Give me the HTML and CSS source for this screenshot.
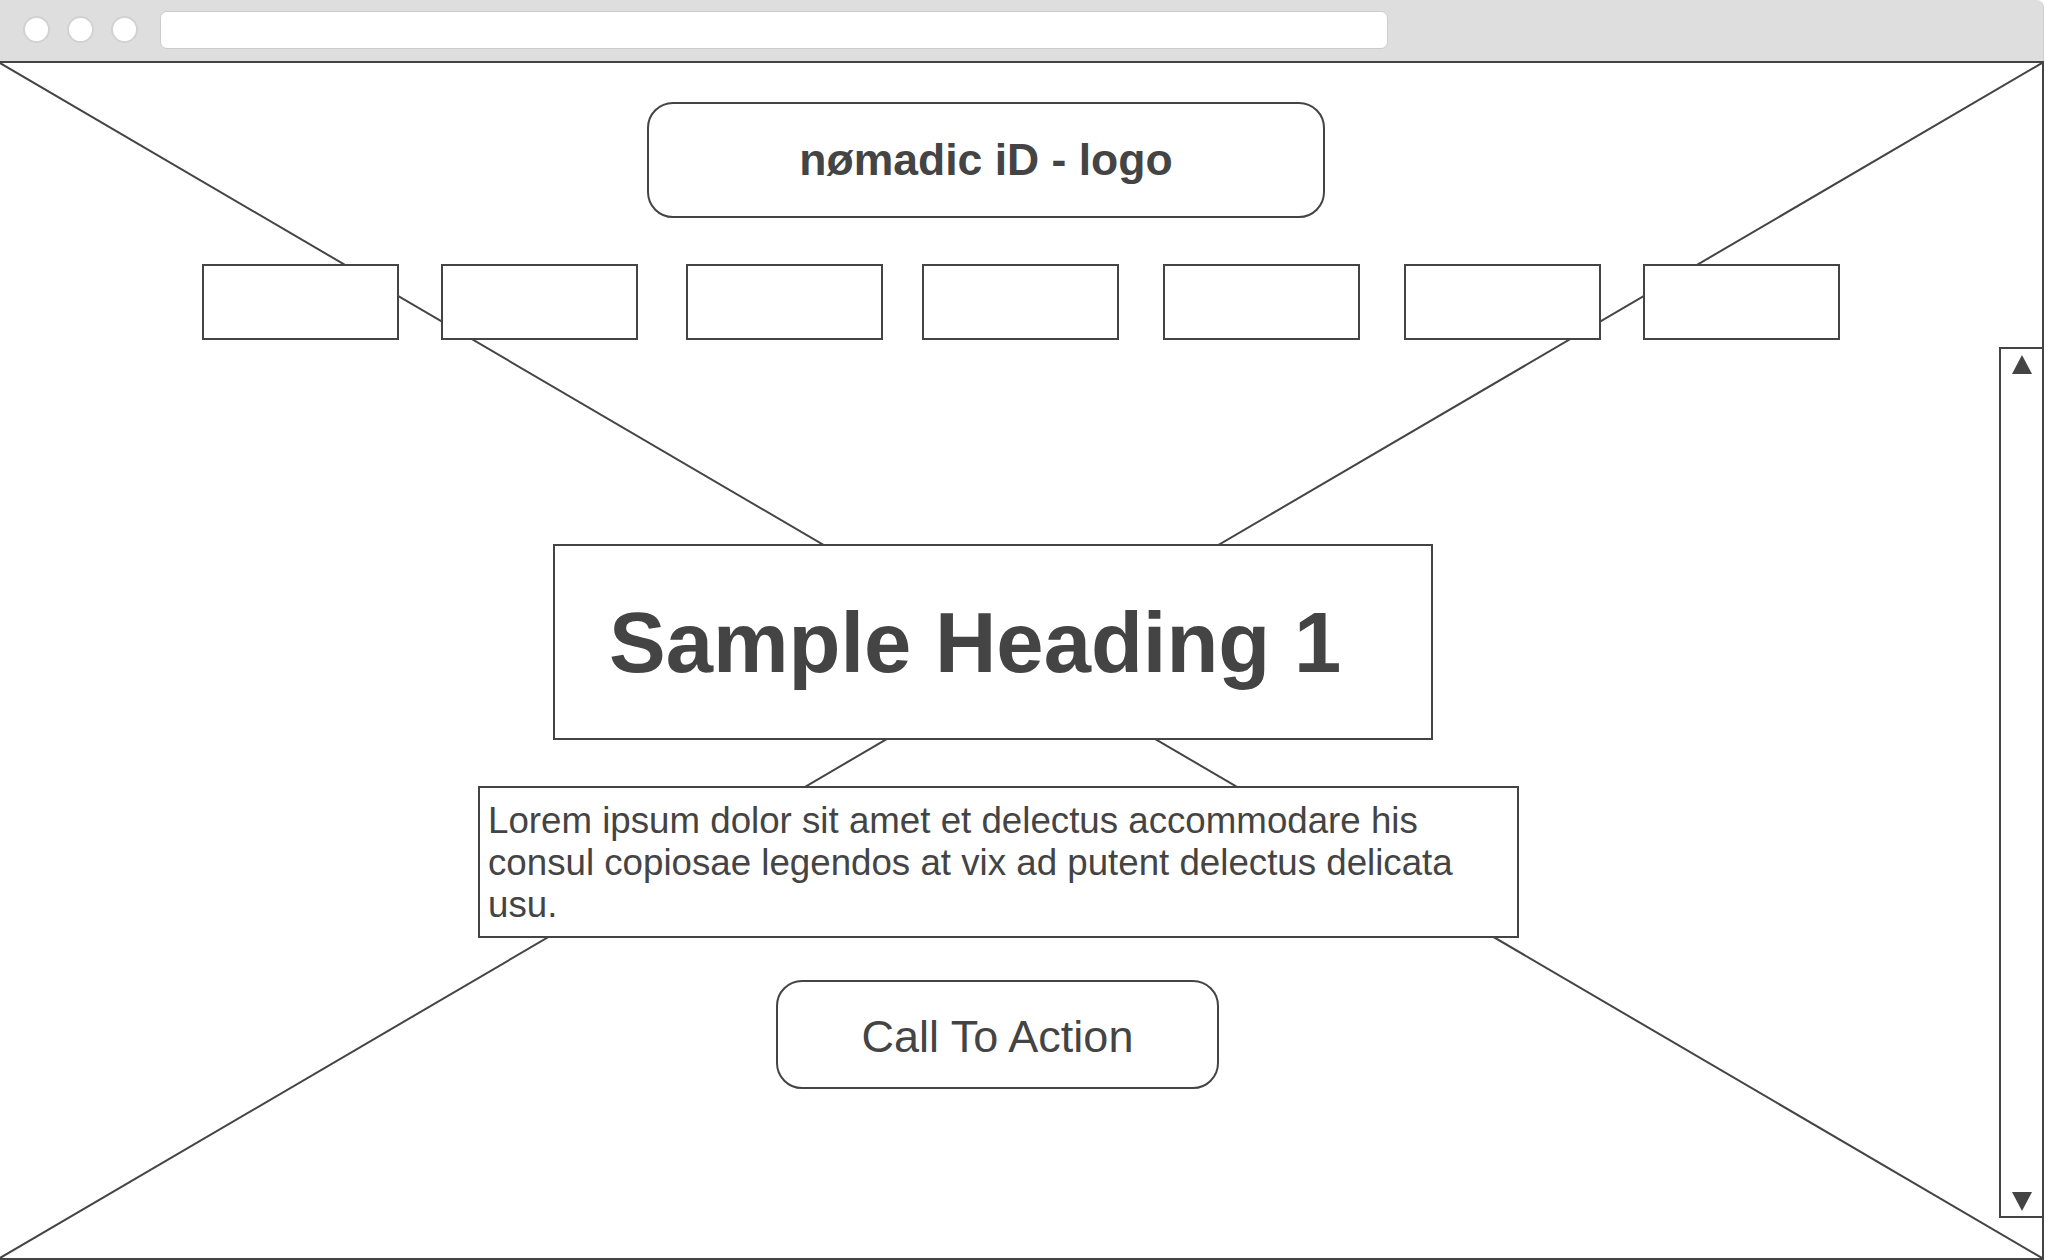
FILE: index.html
```html
<!DOCTYPE html>
<html lang="en">
<head>
<meta charset="utf-8">
<title>nømadic iD - wireframe</title>
<link rel="stylesheet" href="styles.css">
</head>
<body>
<div class="window">
  <div class="topbar">
    <span class="dot"></span>
    <span class="dot"></span>
    <span class="dot"></span>
    <div class="urlbar"></div>
  </div>
  <div class="frame">
    <svg class="cross" viewBox="0 0 100 100" preserveAspectRatio="none" aria-hidden="true">
      <line x1="0" y1="0" x2="100" y2="100" vector-effect="non-scaling-stroke"/>
      <line x1="100" y1="0" x2="0" y2="100" vector-effect="non-scaling-stroke"/>
    </svg>
    <div class="content">
      <div class="logo">nømadic iD - logo</div>
      <nav class="nav">
        <div class="nav-item"></div>
        <div class="nav-item"></div>
        <div class="nav-item"></div>
        <div class="nav-item"></div>
        <div class="nav-item"></div>
        <div class="nav-item"></div>
        <div class="nav-item"></div>
      </nav>
      <div class="heading-box"><h1 class="heading">Sample Heading 1</h1></div>
      <p class="para">Lorem ipsum dolor sit amet et delectus accommodare his consul copiosae legendos at vix ad putent delectus delicata usu.</p>
      <div class="cta">Call To Action</div>
    </div>
    <div class="scrollbar">
      <span class="arrow-up"></span>
      <span class="arrow-down"></span>
    </div>
  </div>
</div>
</body>
</html>
```
FILE: styles.css
```css
html, body {
  margin: 0;
  padding: 0;
  background: #ffffff;
}
body {
  width: 2046px;
  height: 1260px;
  overflow: hidden;
  font-family: "Liberation Sans", Arial, sans-serif;
  color: #444444;
}
.window {
  width: 2044px;
  height: 1260px;
  display: flex;
  flex-direction: column;
}
.topbar {
  height: 61px;
  flex: none;
  box-sizing: border-box;
  background: #dedede;
  border-top-right-radius: 8px;
  border-right: 1px solid #cfcfcf;
  display: flex;
  align-items: center;
  padding-left: 23px;
}
.dot {
  width: 23px;
  height: 23px;
  border-radius: 50%;
  background: #ffffff;
  border: 2px solid #d2d2d2;
  margin-right: 17px;
  flex: none;
  margin-top: -2px;
}
.dot:nth-child(3) {
  margin-right: 22px;
}
.urlbar {
  width: 1226px;
  height: 36px;
  background: #ffffff;
  border: 1.5px solid #cccccc;
  border-radius: 7px;
  margin-top: -2px;
}
.frame {
  flex: 1;
  position: relative;
  display: flex;
  border-top: 2px solid #444444;
  border-right: 2px solid #444444;
  border-bottom: 2px solid #444444;
}
.cross {
  position: absolute;
  left: 0;
  top: 0;
  width: 100%;
  height: 100%;
  z-index: 0;
}
.cross line {
  stroke: #444444;
  stroke-width: 2;
}
.content {
  position: relative;
  z-index: 1;
  flex: 1;
  display: flex;
  flex-direction: column;
  align-items: flex-start;
}
.logo {
  margin: 39px 0 0 647px;
  width: 678px;
  height: 116px;
  box-sizing: border-box;
  border: 2px solid #444444;
  border-radius: 26px;
  background: #ffffff;
  display: flex;
  align-items: center;
  justify-content: center;
  font-size: 44.5px;
  font-weight: bold;
}
.nav {
  margin: 46px 0 0 202px;
  display: flex;
}
.nav-item {
  width: 197px;
  height: 76px;
  box-sizing: border-box;
  border: 2px solid #444444;
  background: #ffffff;
  flex: none;
}
.nav-item:nth-child(2) { margin-left: 42px; }
.nav-item:nth-child(3) { margin-left: 48px; }
.nav-item:nth-child(4) { margin-left: 39px; }
.nav-item:nth-child(5) { margin-left: 44px; }
.nav-item:nth-child(6) { margin-left: 44px; }
.nav-item:nth-child(7) { margin-left: 42px; }
.heading-box {
  margin: 204px 0 0 553px;
  width: 880px;
  height: 196px;
  box-sizing: border-box;
  border: 2px solid #444444;
  background: #ffffff;
  display: flex;
  align-items: center;
  padding-left: 54px;
}
.heading {
  margin: 0;
  font-size: 85px;
  font-weight: bold;
  line-height: 1;
}
.para {
  margin: 46px 0 0 478px;
  width: 1041px;
  height: 152px;
  box-sizing: border-box;
  border: 2px solid #444444;
  background: #ffffff;
  padding: 12px 6px 0 8px;
  font-size: 36.7px;
  line-height: 42px;
}
.cta {
  margin: 42px 0 0 776px;
  width: 443px;
  height: 109px;
  box-sizing: border-box;
  border: 2px solid #444444;
  border-radius: 26px;
  background: #ffffff;
  display: flex;
  align-items: center;
  justify-content: center;
  padding-top: 4px;
  font-size: 45px;
}
.scrollbar {
  position: relative;
  z-index: 1;
  width: 43px;
  flex: none;
  box-sizing: border-box;
  margin: 284px 0 40px 0;
  border-left: 2px solid #444444;
  border-top: 2px solid #444444;
  border-bottom: 2px solid #444444;
  background: #ffffff;
  display: flex;
  flex-direction: column;
  justify-content: space-between;
  align-items: center;
  padding: 6px 0 5px 0;
}
.arrow-up {
  width: 0;
  height: 0;
  border-left: 10px solid transparent;
  border-right: 10px solid transparent;
  border-bottom: 19px solid #444444;
}
.arrow-down {
  width: 0;
  height: 0;
  border-left: 10px solid transparent;
  border-right: 10px solid transparent;
  border-top: 19px solid #444444;
}
```
